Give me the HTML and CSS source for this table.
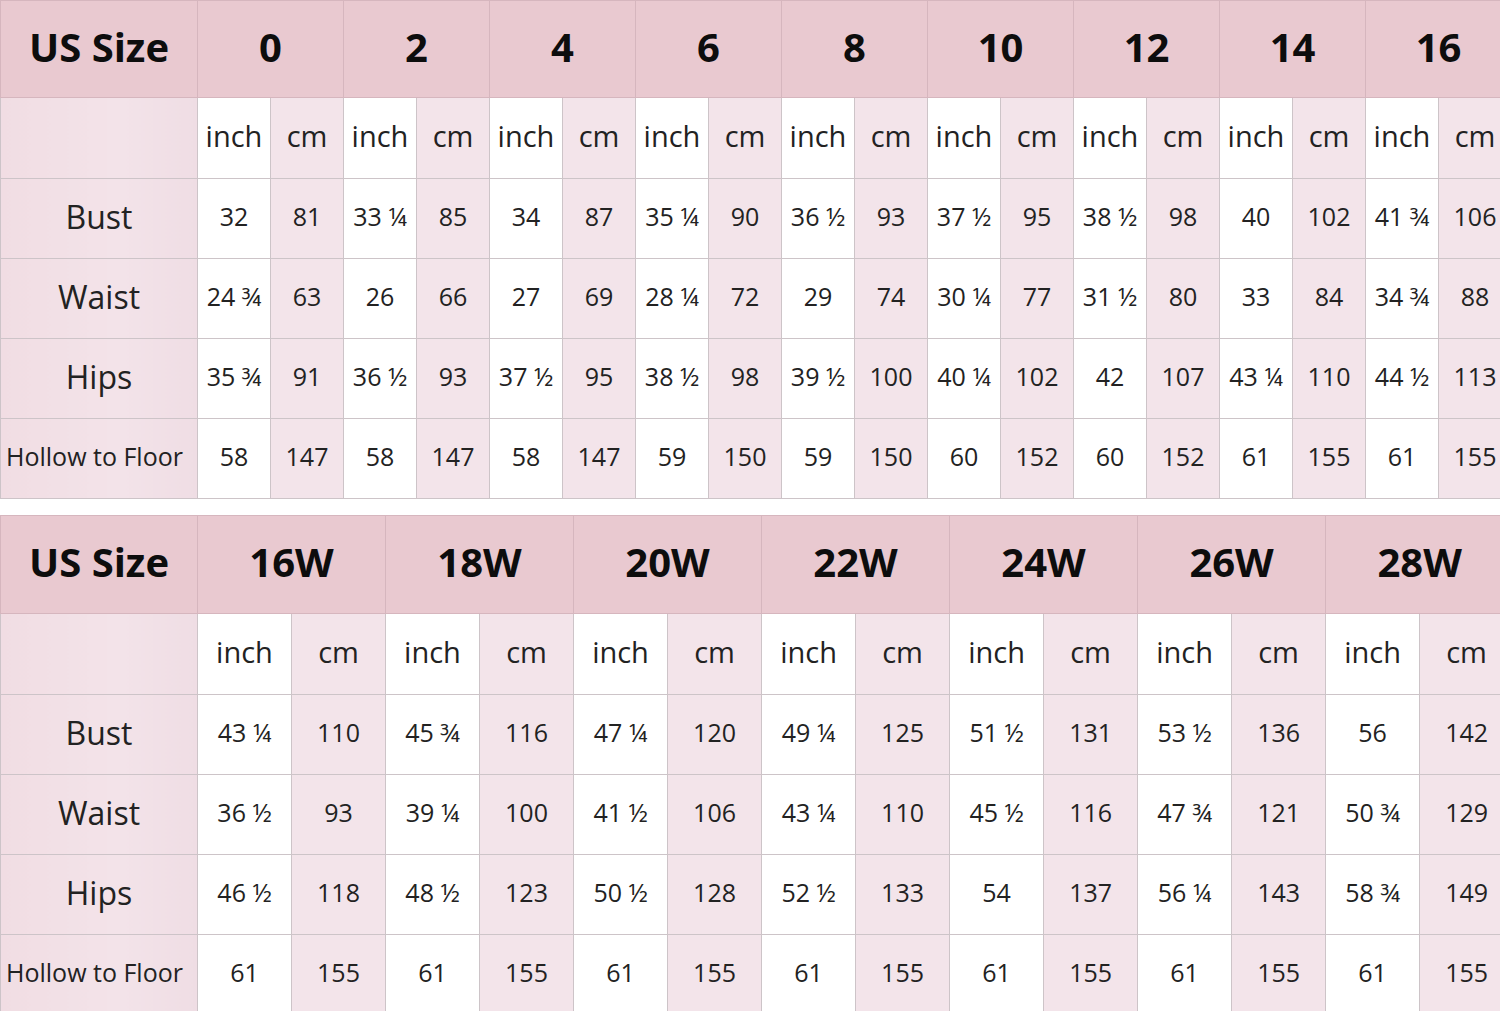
FILE: index.html
```html
<!DOCTYPE html>
<html>
<head>
<meta charset="utf-8">
<link rel="stylesheet" href="styles.css">
</head>
<body>
<div class="page">
<table class="chart chart-a">
  <colgroup>
    <col class="c-label">
    <col class="c-a"><col class="c-a"><col class="c-a"><col class="c-a"><col class="c-a"><col class="c-a">
    <col class="c-a"><col class="c-a"><col class="c-a"><col class="c-a"><col class="c-a"><col class="c-a">
    <col class="c-a"><col class="c-a"><col class="c-a"><col class="c-a"><col class="c-a"><col class="c-a">
  </colgroup>
  <tr class="head">
    <th class="lbl">US Size</th>
    <th colspan="2">0</th><th colspan="2">2</th><th colspan="2">4</th><th colspan="2">6</th><th colspan="2">8</th>
    <th colspan="2">10</th><th colspan="2">12</th><th colspan="2">14</th><th colspan="2">16</th>
  </tr>
  <tr class="units">
    <td class="lbl"></td>
    <td class="in">inch</td><td class="cm">cm</td><td class="in">inch</td><td class="cm">cm</td><td class="in">inch</td><td class="cm">cm</td>
    <td class="in">inch</td><td class="cm">cm</td><td class="in">inch</td><td class="cm">cm</td><td class="in">inch</td><td class="cm">cm</td>
    <td class="in">inch</td><td class="cm">cm</td><td class="in">inch</td><td class="cm">cm</td><td class="in">inch</td><td class="cm">cm</td>
  </tr>
  <tr class="data">
    <td class="lbl">Bust</td>
    <td class="in">32</td><td class="cm">81</td><td class="in">33 ¼</td><td class="cm">85</td><td class="in">34</td><td class="cm">87</td>
    <td class="in">35 ¼</td><td class="cm">90</td><td class="in">36 ½</td><td class="cm">93</td><td class="in">37 ½</td><td class="cm">95</td>
    <td class="in">38 ½</td><td class="cm">98</td><td class="in">40</td><td class="cm">102</td><td class="in">41 ¾</td><td class="cm">106</td>
  </tr>
  <tr class="data">
    <td class="lbl">Waist</td>
    <td class="in">24 ¾</td><td class="cm">63</td><td class="in">26</td><td class="cm">66</td><td class="in">27</td><td class="cm">69</td>
    <td class="in">28 ¼</td><td class="cm">72</td><td class="in">29</td><td class="cm">74</td><td class="in">30 ¼</td><td class="cm">77</td>
    <td class="in">31 ½</td><td class="cm">80</td><td class="in">33</td><td class="cm">84</td><td class="in">34 ¾</td><td class="cm">88</td>
  </tr>
  <tr class="data">
    <td class="lbl">Hips</td>
    <td class="in">35 ¾</td><td class="cm">91</td><td class="in">36 ½</td><td class="cm">93</td><td class="in">37 ½</td><td class="cm">95</td>
    <td class="in">38 ½</td><td class="cm">98</td><td class="in">39 ½</td><td class="cm">100</td><td class="in">40 ¼</td><td class="cm">102</td>
    <td class="in">42</td><td class="cm">107</td><td class="in">43 ¼</td><td class="cm">110</td><td class="in">44 ½</td><td class="cm">113</td>
  </tr>
  <tr class="data">
    <td class="lbl small">Hollow to Floor</td>
    <td class="in">58</td><td class="cm">147</td><td class="in">58</td><td class="cm">147</td><td class="in">58</td><td class="cm">147</td>
    <td class="in">59</td><td class="cm">150</td><td class="in">59</td><td class="cm">150</td><td class="in">60</td><td class="cm">152</td>
    <td class="in">60</td><td class="cm">152</td><td class="in">61</td><td class="cm">155</td><td class="in">61</td><td class="cm">155</td>
  </tr>
</table>

<table class="chart chart-b">
  <colgroup>
    <col class="c-label">
    <col class="c-b"><col class="c-b"><col class="c-b"><col class="c-b"><col class="c-b"><col class="c-b"><col class="c-b">
    <col class="c-b"><col class="c-b"><col class="c-b"><col class="c-b"><col class="c-b"><col class="c-b"><col class="c-b">
  </colgroup>
  <tr class="head">
    <th class="lbl">US Size</th>
    <th colspan="2">16W</th><th colspan="2">18W</th><th colspan="2">20W</th><th colspan="2">22W</th>
    <th colspan="2">24W</th><th colspan="2">26W</th><th colspan="2">28W</th>
  </tr>
  <tr class="units">
    <td class="lbl"></td>
    <td class="in">inch</td><td class="cm">cm</td><td class="in">inch</td><td class="cm">cm</td><td class="in">inch</td><td class="cm">cm</td>
    <td class="in">inch</td><td class="cm">cm</td><td class="in">inch</td><td class="cm">cm</td><td class="in">inch</td><td class="cm">cm</td>
    <td class="in">inch</td><td class="cm">cm</td>
  </tr>
  <tr class="data">
    <td class="lbl">Bust</td>
    <td class="in">43 ¼</td><td class="cm">110</td><td class="in">45 ¾</td><td class="cm">116</td><td class="in">47 ¼</td><td class="cm">120</td>
    <td class="in">49 ¼</td><td class="cm">125</td><td class="in">51 ½</td><td class="cm">131</td><td class="in">53 ½</td><td class="cm">136</td>
    <td class="in">56</td><td class="cm">142</td>
  </tr>
  <tr class="data">
    <td class="lbl">Waist</td>
    <td class="in">36 ½</td><td class="cm">93</td><td class="in">39 ¼</td><td class="cm">100</td><td class="in">41 ½</td><td class="cm">106</td>
    <td class="in">43 ¼</td><td class="cm">110</td><td class="in">45 ½</td><td class="cm">116</td><td class="in">47 ¾</td><td class="cm">121</td>
    <td class="in">50 ¾</td><td class="cm">129</td>
  </tr>
  <tr class="data">
    <td class="lbl">Hips</td>
    <td class="in">46 ½</td><td class="cm">118</td><td class="in">48 ½</td><td class="cm">123</td><td class="in">50 ½</td><td class="cm">128</td>
    <td class="in">52 ½</td><td class="cm">133</td><td class="in">54</td><td class="cm">137</td><td class="in">56 ¼</td><td class="cm">143</td>
    <td class="in">58 ¾</td><td class="cm">149</td>
  </tr>
  <tr class="data">
    <td class="lbl small">Hollow to Floor</td>
    <td class="in">61</td><td class="cm">155</td><td class="in">61</td><td class="cm">155</td><td class="in">61</td><td class="cm">155</td>
    <td class="in">61</td><td class="cm">155</td><td class="in">61</td><td class="cm">155</td><td class="in">61</td><td class="cm">155</td>
    <td class="in">61</td><td class="cm">155</td>
  </tr>
</table>
</div>
</body>
</html>
```
FILE: styles.css
```css
html, body {
  margin: 0;
  padding: 0;
  background: #ffffff;
  overflow: hidden;
}
.page {
  width: 1520px;
  font-family: "Open Sans", "Noto Sans", "Liberation Sans", sans-serif;
  color: #1a1a1a;
}
.chart {
  border-collapse: collapse;
  table-layout: fixed;
}
.chart-a { width: 1511px; }
.chart-b { width: 1513px; margin-top: 16px; }
.c-label { width: 197px; }
.c-a { width: 73px; }
.c-b { width: 94px; }
.chart th, .chart td {
  border: 1px solid #cdc4c8;
  text-align: center;
  padding: 0 0 5px 0;
  white-space: nowrap;
  overflow: hidden;
}
.head th {
  background: #e9c9d0;
  font-weight: 700;
  font-size: 40px;
  color: #0d0d0d;
  border-color: #d6b6be;
  height: 90px;
  padding-bottom: 6px;
}
.chart-b .head th { height: 91px; }
.units td {
  height: 75px;
  font-size: 29px;
  color: #222222;
}
.data td {
  height: 74px;
  font-size: 25px;
  color: #222222;
}
.data td.lbl {
  font-size: 32px;
}
.data td.lbl.small {
  font-size: 25px;
  text-align: left;
  padding-left: 5px;
}
.lbl {
  background: linear-gradient(90deg, #f1dde3 0%, #f3e3e9 60%, #efdde4 100%);
}
.in { background: #ffffff; }
.cm { background: #f3e4ea; }
```
